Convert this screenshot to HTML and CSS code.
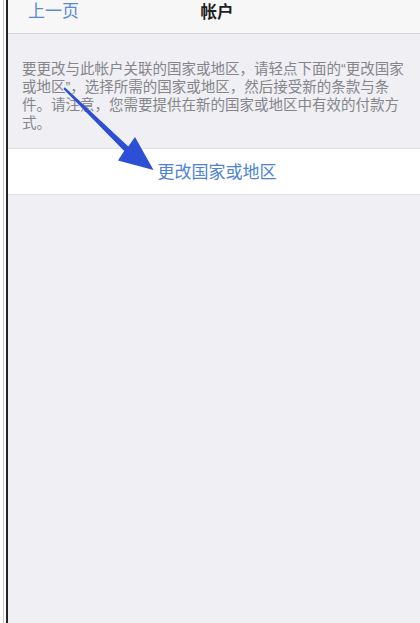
FILE: index.html
```html
<!DOCTYPE html>
<html lang="zh-CN">
<head>
<meta charset="utf-8">
<title>帐户</title>
<link rel="stylesheet" href="styles.css">
</head>
<body>
<div class="frame">
  <div class="screen">
    <header class="navbar">
      <a class="nav-back">上一页</a>
      <h1 class="nav-title">帐户</h1>
      <span class="nav-spacer"></span>
    </header>
    <p class="section-note">要更改与此帐户关联的国家或地区，请轻点下面的“更改国家<br>或地区”，选择所需的国家或地区，然后接受新的条款与条<br>件。请注意，您需要提供在新的国家或地区中有效的付款方<br>式。</p>
    <div class="cell">
      <a class="cell-link">更改国家或地区</a>
    </div>
  </div>
  <!-- pointer arrow drawn over the text -->
  <svg class="pointer" width="420" height="623" viewBox="0 0 420 623">
    <polygon points="66.8,87.2 130.3,146.4 137,137 155.5,170 120,160.5 126.2,151 65.4,89" fill="#2c4fd6"/>
  </svg>
</div>
</body>
</html>
```
FILE: styles.css
```css
html, body {
  margin: 0;
  padding: 0;
  background: #ffffff;
  overflow: hidden;
}

body {
  font-family: "Liberation Sans", "Noto Sans CJK SC", sans-serif;
}

.frame {
  position: relative;
  width: 420px;
  height: 623px;
  overflow: hidden;
  box-sizing: border-box;
  margin-left: 3px;
  border-left: 1px solid #c6c6c6;
  padding-left: 2px;
  background: #ffffff;
}

.screen {
  width: 418px;
  height: 623px;
  border-left: 2px solid #232323;
  background: #efeff4;
  display: flex;
  flex-direction: column;
}

.navbar {
  height: 33px;
  border-bottom: 1px solid #d6d6da;
  background: #f7f7f7;
  display: grid;
  grid-template-columns: 1fr auto 1fr;
  align-items: start;
  padding: 0 20px;
}

.nav-back {
  color: #5a8ad9;
  font-size: 17px;
  line-height: 24px;
}

.nav-title {
  margin: 0;
  color: #1f1f1f;
  font-size: 16.5px;
  font-weight: bold;
  line-height: 24px;
}

.section-note {
  margin: 26px 0 16px;
  padding: 0 8px 0 14px;
  color: #85858a;
  font-size: 14.5px;
  line-height: 18px;
  white-space: nowrap;
}

.cell {
  height: 43px;
  border-top: 1px solid #e0e0e4;
  border-bottom: 1px solid #e0e0e4;
  background: #ffffff;
  display: flex;
  align-items: center;
  justify-content: center;
  padding-top: 2px;
  box-sizing: content-box;
}

.cell-link {
  color: #4d82d6;
  font-size: 17px;
  line-height: 22px;
}

.pointer {
  position: absolute;
  left: -6px;
  top: 0;
  pointer-events: none;
}
```
